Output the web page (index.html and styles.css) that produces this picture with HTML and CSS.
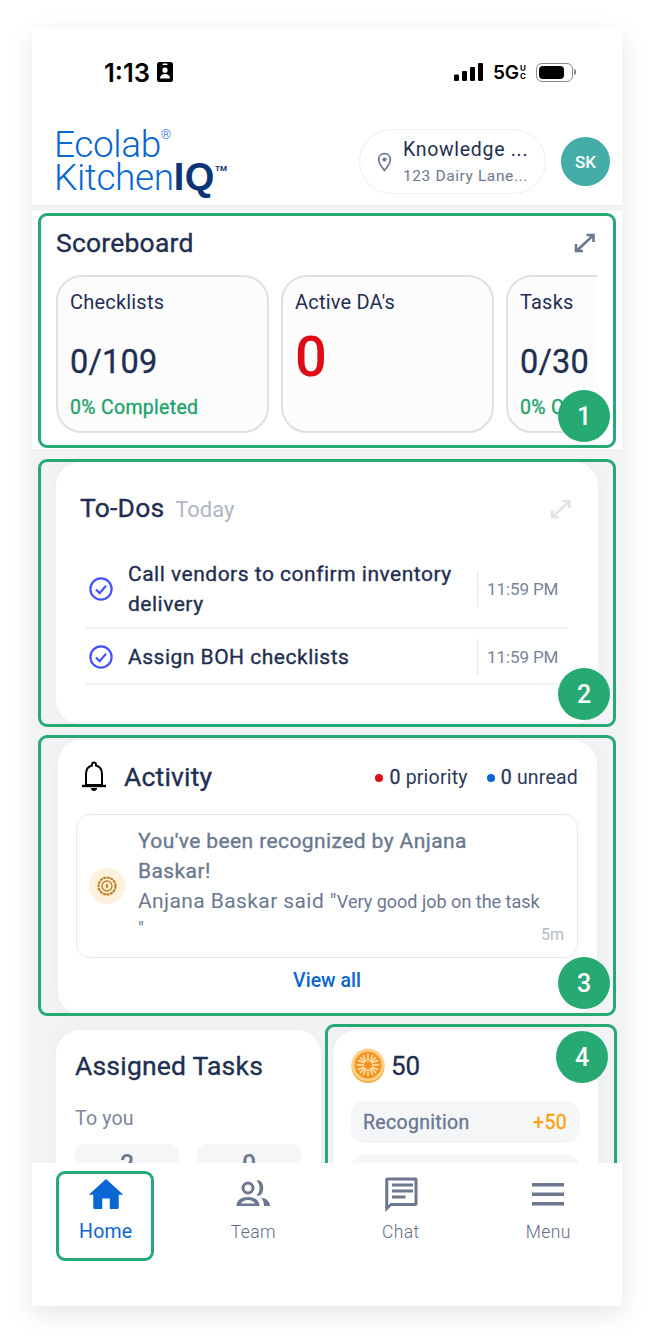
FILE: index.html
```html
<!DOCTYPE html>
<html lang="en">
<head>
    <meta charset="UTF-8">
    <meta name="viewport" content="width=device-width, initial-scale=1.0">
    <title>Ecolab KitchenIQ Home</title>
    <link rel="stylesheet" href="styles.css">
</head>
<body>
    <div class="phone">
        <div class="status-bar">
            <div class="status-left">
                <span class="clock">1:13</span>
                <svg class="id-icon" viewBox="0 0 16 20">
                    <rect width="16" height="20" rx="2.5" fill="#000"/>
                    <rect x="5.5" y="1.6" width="5" height="1.5" rx=".7" fill="#fff"/>
                    <circle cx="8" cy="8.2" r="2.6" fill="#fff"/>
                    <path d="M3 16.500c0-3 2-4.500 5-4.500s5 1.500 5 4.500z" fill="#fff"/>
                </svg>
            </div>
            <div class="status-right">
                <svg class="signal" viewBox="0 0 30 18">
                    <rect x="0" y="11.500" width="5" height="6.500" rx="1.200"/>
                    <rect x="8" y="8" width="5" height="10" rx="1.200"/>
                    <rect x="16" y="4" width="5" height="14" rx="1.200"/>
                    <rect x="24" y="0" width="5" height="18" rx="1.200"/>
                </svg>
                <span class="network">5G<span class="network-uc">U<br>C</span></span>
                <span class="battery"><span class="battery-fill"></span></span>
            </div>
        </div>

        <header class="app-header">
            <div class="logo">
                <div class="logo-line">Ecolab<sup class="logo-reg">®</sup></div>
                <div class="logo-line">Kitchen<b class="logo-iq">IQ</b><sup class="logo-tm">TM</sup></div>
            </div>
            <div class="location">
                <svg class="pin" viewBox="0 0 18 24">
                    <path d="M9 2C5 2 2 5 2 9c0 4.500 4 9.500 7 13 3-3.500 7-8.500 7-13 0-4-3-7-7-7z" fill="none" stroke="#6b7890" stroke-width="2"/>
                    <circle cx="9" cy="9" r="2.500" fill="#6b7890"/>
                </svg>
                <div class="location-text">
                    <div class="location-name">Knowledge ...</div>
                    <div class="location-addr">123 Dairy Lane...</div>
                </div>
            </div>
            <div class="avatar">SK</div>
        </header>

        <main class="content">
            <section class="scoreboard">
                <div class="card-head">
                    <h2 class="title">Scoreboard</h2>
                    <svg class="expand" viewBox="0 0 22 20">
                        <path d="M3 17.500 19 2.500M12.500 2h7v7M2 11v7h7" fill="none" stroke="#6b7890" stroke-width="2.600"/>
                    </svg>
                </div>
                <div class="score-row">
                    <div class="score-card">
                        <div class="score-label">Checklists</div>
                        <div class="score-value">0/109</div>
                        <div class="score-note">0% Completed</div>
                    </div>
                    <div class="score-card">
                        <div class="score-label">Active DA's</div>
                        <div class="score-alert">0</div>
                    </div>
                    <div class="score-card">
                        <div class="score-label">Tasks</div>
                        <div class="score-value">0/30</div>
                        <div class="score-note">0% Completed</div>
                    </div>
                </div>
            </section>

            <section class="card todos">
                <div class="card-head">
                    <h2 class="title">To-Dos <span class="title-sub">Today</span></h2>
                    <svg class="expand" viewBox="0 0 22 20">
                        <path d="M3 17.500 19 2.500M12.500 2h7v7M2 11v7h7" fill="none" stroke="#e1e4e9" stroke-width="2.600"/>
                    </svg>
                </div>
                <div class="todo-row">
                    <svg class="check" viewBox="0 0 26 26">
                        <circle cx="13" cy="13" r="11.500" fill="none" stroke="#4353ff" stroke-width="2.400"/>
                        <path d="M7.500 13.500l4 4 7-8" fill="none" stroke="#4353ff" stroke-width="2.400"/>
                    </svg>
                    <div class="todo-text">Call vendors to confirm inventory delivery</div>
                    <div class="todo-time">11:59 PM</div>
                </div>
                <div class="todo-row">
                    <svg class="check" viewBox="0 0 26 26">
                        <circle cx="13" cy="13" r="11.500" fill="none" stroke="#4353ff" stroke-width="2.400"/>
                        <path d="M7.500 13.500l4 4 7-8" fill="none" stroke="#4353ff" stroke-width="2.400"/>
                    </svg>
                    <div class="todo-text">Assign BOH checklists</div>
                    <div class="todo-time">11:59 PM</div>
                </div>
            </section>

            <section class="card activity">
                <div class="activity-head">
                    <svg class="bell" viewBox="0 0 26 32">
                        <path d="M13 1.500a2 2 0 0 1 2 2v1c4 1 6 4.500 6 8.500v11H5V13c0-4 2-7.500 6-8.500v-1a2 2 0 0 1 2-2z" fill="none" stroke="#000" stroke-width="2"/>
                        <path d="M1 25h24" stroke="#000" stroke-width="2.400"/>
                        <path d="M10 27h6a3 3 0 0 1-6 0z" fill="#000"/>
                    </svg>
                    <h2 class="title">Activity</h2>
                    <div class="counts">
                        <span class="dot dot-red"></span><span class="count-num">0</span> priority
                        <span class="dot dot-blue"></span><span class="count-num">0</span> unread
                    </div>
                </div>
                <div class="notice">
                    <div class="notice-icon">
                        <svg viewBox="0 0 20 20" width="20" height="20">
                            <circle cx="10" cy="10" r="8.500" fill="none" stroke="#c08122" stroke-width="2.200" stroke-dasharray="3 .6"/>
                            <circle cx="10" cy="10" r="5" fill="none" stroke="#c08122" stroke-width="1.400"/>
                            <path d="M10 7l1.500 3L10 13l-1.500-3z" fill="#c08122"/>
                        </svg>
                    </div>
                    <div class="notice-body">
                        <div class="notice-title">You've been recognized by Anjana Baskar!</div>
                        <div class="notice-said">Anjana Baskar said "<span class="notice-quote">Very good job on the task<br>"</span></div>
                        <div class="notice-age">5m</div>
                    </div>
                </div>
                <div class="view-all">View all</div>
            </section>

            <div class="bottom-cards">
                <section class="card assigned">
                    <h2 class="title">Assigned Tasks</h2>
                    <div class="assigned-sub">To you</div>
                    <div class="assigned-tiles">
                        <div class="assigned-tile">2</div>
                        <div class="assigned-tile">0</div>
                    </div>
                </section>
                <section class="card points">
                    <div class="points-head">
                        <svg class="coin" viewBox="0 0 34 36">
                            <circle cx="17" cy="18.500" r="16.500" fill="#f8a827"/>
                            <circle cx="17" cy="17" r="16.500" fill="#fbd28c"/>
                            <circle cx="17" cy="17" r="13.500" fill="#f5951f"/>
                            <g stroke="#fde3b8" stroke-width="1.500" stroke-linecap="round">
                                <path d="M17 6.500v6M17 21.500v6M6.500 17h6M21.500 17h6M9.600 9.600l4.200 4.200M20.200 20.200l4.200 4.200M24.400 9.600l-4.200 4.200M13.800 20.200l-4.200 4.200M12.500 7.500l2.300 5.200M19.200 21.300l2.300 5.200M21.500 7.500l-2.300 5.200M14.800 21.300l-2.300 5.200M7.500 12.500l5.200 2.300M21.300 19.200l5.200 2.300M26.500 12.500l-5.200 2.300M12.700 19.200l-5.200 2.300"/>
                            </g>
                        </svg>
                        <span class="points-total">50</span>
                    </div>
                    <div class="points-row">
                        <span>Recognition</span>
                        <span class="points-plus">+50</span>
                    </div>
                    <div class="points-row"></div>
                </section>
            </div>

            <div class="mark mark-score"><span class="mark-num">1</span></div>
            <div class="mark mark-todos"><span class="mark-num">2</span></div>
            <div class="mark mark-activity"><span class="mark-num">3</span></div>
            <div class="mark mark-points"><span class="mark-num">4</span></div>
        </main>

        <nav class="tabs">
            <div class="tab tab-active">
                <svg class="tab-icon" viewBox="0 0 24 24">
                    <path d="M12 2 0.500 12.500H3.500V21a1 1 0 0 0 1 1H9.500v-7h5v7h5a1 1 0 0 0 1-1v-8.500h3z" fill="#0a66d2"/>
                </svg>
                <span>Home</span>
            </div>
            <div class="tab">
                <svg class="tab-icon" viewBox="0 0 36 36">
                    <circle cx="13" cy="12" r="5" fill="none" stroke="#6b7890" stroke-width="3"/>
                    <path d="M23 5c6 0 6 14 0 14 3-4 3-10 0-14z" fill="#6b7890" stroke="#6b7890" stroke-width="1.500"/>
                    <path d="M1.500 30c0-6 5-9 11.500-9s11.500 3 11.500 9zM6 27.500h14c-1-2-4-3.500-7-3.500s-6 1.500-7 3.500z" fill="#6b7890" fill-rule="evenodd"/>
                    <path d="M26 21.500c5 1 9 3.500 9 8.500h-6c0-3.500-1-6-3-8.500z" fill="#6b7890"/>
                </svg>
                <span>Team</span>
            </div>
            <div class="tab">
                <svg class="tab-icon tab-icon-chat" viewBox="0 0 24 24">
                    <path d="M21.500 1H3C1.900 1 1.500 1.500 1.500 2.500V24l4-4h16c1 0 1.500-.5 1.500-1.500v-16C23 1.500 22.500 1 21.500 1zm-.5 17H5L3.500 19.500V3H21zM6 5h14v2H6zM6 9h14v2H6zM6 13h9v2H6z" fill="#6b7890"/>
                </svg>
                <span>Chat</span>
            </div>
            <div class="tab">
                <svg class="tab-icon" viewBox="0 0 36 36">
                    <path d="M2 7h32v3.500H2zM2 16.500h32V20H2zM2 26h32v3.500H2z" fill="#6b7890"/>
                </svg>
                <span>Menu</span>
            </div>
            <div class="mark mark-home"></div>
        </nav>
    </div>
</body>
</html>
```

FILE: styles.css
```css
* {
    box-sizing: border-box;
}
body {
    margin: 0;
    padding: 28px 32px 0;
    height: 1342px;
    overflow: hidden;
    background: #fff;
    font-family: Roboto, "Liberation Sans", sans-serif;
    color: #1f2f52;
}
.phone {
    width: 590px;
    height: 1278px;
    display: flex;
    flex-direction: column;
    background: #fff;
    box-shadow: 0 8px 24px rgba(0, 0, 0, 0.1);
}

/* status bar */
.status-bar {
    height: 88px;
    flex: none;
    display: flex;
    justify-content: space-between;
    align-items: center;
    padding: 0 49px 0 72px;
}
.status-left, .status-right {
    display: flex;
    align-items: center;
}
.clock {
    font-family: Inter, sans-serif;
    font-size: 25.500px;
    font-weight: 600;
    color: #000;
}
.id-icon {
    width: 16px;
    height: 20px;
    margin-left: 7px;
}
.signal {
    width: 30px;
    height: 18px;
}
.network {
    display: flex;
    align-items: center;
    margin-left: 9px;
    font-family: Inter, sans-serif;
    font-size: 19px;
    font-weight: 600;
    color: #000;
}
.network-uc {
    font-size: 8px;
    line-height: 8px;
    font-weight: 700;
    margin-left: 1px;
}
.battery {
    position: relative;
    width: 37px;
    height: 19px;
    margin-left: 10px;
    padding: 2px;
    border: 1.500px solid #8a8a8a;
    border-radius: 6px;
}
.battery:after {
    content: "";
    position: absolute;
    right: -4px;
    top: 5px;
    width: 2px;
    height: 6px;
    border-radius: 0 2px 2px 0;
    background: #8a8a8a;
}
.battery-fill {
    display: block;
    width: 25px;
    height: 100%;
    border-radius: 4px;
    background: #000;
}

/* app header */
.app-header {
    height: 90px;
    flex: none;
    display: flex;
    align-items: flex-start;
    padding: 13px 12px 0 22px;
    border-bottom: 1px solid #eceef1;
}
.logo {
    flex: 1;
    margin-top: -1px;
    color: #0a66d2;
    font-size: 37px;
    font-weight: 300;
    line-height: 33px;
    letter-spacing: -0.4px;
}
.logo-line {
    white-space: nowrap;
}
.logo-iq {
    font-family: "Liberation Sans", sans-serif;
    font-size: 38px;
    font-weight: 700;
    color: #0b3576;
    letter-spacing: 0.6px;
}
.logo-reg {
    font-size: 13px;
    line-height: 0;
    vertical-align: 18px;
    letter-spacing: 0;
}
.logo-tm {
    font-size: 8px;
    font-weight: 700;
    line-height: 0;
    vertical-align: 19px;
    letter-spacing: 0;
    color: #0b3576;
}
.location {
    width: 187px;
    height: 65px;
    display: flex;
    align-items: center;
    gap: 11px;
    padding-left: 17px;
    border: 1.500px solid #eceef1;
    border-radius: 33px;
}
.pin {
    width: 15px;
    height: 20px;
    flex: none;
}
.location-text {
    margin-top: 3px;
}
.location-name {
    font-size: 19.500px;
    letter-spacing: 0.7px;
    line-height: 26px;
    white-space: nowrap;
}
.location-addr {
    font-size: 15.500px;
    letter-spacing: 0.6px;
    line-height: 26px;
    color: #6b7890;
    white-space: nowrap;
}
.avatar {
    width: 49px;
    height: 49px;
    margin: 8px 0 0 15px;
    display: flex;
    align-items: center;
    justify-content: center;
    border-radius: 50%;
    background: #45ada8;
    color: #fff;
    font-size: 17px;
    font-weight: 500;
}

.content {
    position: relative;
    flex: 1;
    min-height: 0;
    overflow: hidden;
    background: #f2f3f5;
    padding-top: 5px;
}
.card {
    background: #fff;
    border-radius: 24px;
    box-shadow: 0 0 14px rgba(0, 0, 0, 0.03);
}
.card-head {
    display: flex;
    justify-content: space-between;
    align-items: center;
}
/* the installed Roboto has no weight between 400 and 500 */
.title, .score-value, .score-note, .todo-text, .notice-title, .count-num, .points-total, .points-row {
    -webkit-text-stroke: 0.35px;
}
.title {
    margin: 0;
    font-size: 26.500px;
    font-weight: 400;
    line-height: 32px;
    letter-spacing: 0.2px;
}
.title-sub {
    margin-left: 4px;
    font-size: 22px;
    font-weight: 400;
    letter-spacing: 0;
    color: #b0b6c3;
    -webkit-text-stroke: 0;
}
.expand {
    width: 22px;
    height: 20px;
}

/* scoreboard */
.scoreboard {
    height: 238px;
    padding: 16px 24px 0;
    background: #fff;
}
.scoreboard .card-head {
    padding-right: 2px;
}
.score-row {
    display: flex;
    gap: 12px;
    margin-top: 16px;
    overflow: hidden;
}
.score-card {
    flex: 0 0 213px;
    height: 158px;
    padding: 13px 12px;
    border: 2px solid #dfe0e6;
    border-radius: 26px;
    background: #fcfcfd;
}
.score-label {
    font-size: 20px;
    line-height: 24px;
    letter-spacing: 0.2px;
}
.score-value {
    margin-top: 28px;
    font-size: 32.500px;
    line-height: 40px;
    letter-spacing: 0.2px;
}
.score-note {
    margin-top: 14px;
    font-size: 19.500px;
    line-height: 24px;
    letter-spacing: 0.3px;
    color: #1fa36c;
    white-space: nowrap;
}
.score-alert {
    margin-top: 11px;
    font-size: 56px;
    font-weight: 500;
    line-height: 64px;
    color: #e10b17;
}

/* to-dos */
.todos {
    margin: 13px 24px 0;
    height: 262px;
    padding: 30px 26px 0 24px;
}
.todos .card-head {
    margin-bottom: 27px;
}
.todo-row {
    display: flex;
    align-items: center;
    margin-left: 6px;
    margin-right: 4px;
    padding: 6px 0 8px 3px;
    border-bottom: 2px solid #eff0f2;
}
.todo-row + .todo-row {
    padding-top: 10px;
}
.check {
    width: 24px;
    height: 24px;
    flex: none;
}
.todo-text {
    flex: 1;
    padding-left: 15px;
    padding-right: 14px;
    font-size: 21px;
    line-height: 30px;
    letter-spacing: 0.5px;
}
.todo-time {
    flex: none;
    width: 91px;
    padding: 8px 0 8px 9px;
    border-left: 1px solid #e6e8ec;
    font-size: 17px;
    line-height: 20px;
    letter-spacing: -0.1px;
    color: #7a8499;
    white-space: nowrap;
}

/* activity */
.activity {
    margin: 16px 25px 0 26px;
    height: 275px;
    padding: 21px 19px 0 18px;
}
.activity-head {
    display: flex;
    align-items: center;
}
.bell {
    width: 26px;
    height: 32px;
    margin: 0 17px 0 5px;
}
.counts {
    margin-left: auto;
    font-size: 19.500px;
    letter-spacing: 0.2px;
    color: #2b3a5c;
    white-space: nowrap;
}
.dot {
    display: inline-block;
    width: 8px;
    height: 8px;
    margin-right: 6px;
    border-radius: 50%;
    vertical-align: 2px;
}
.dot-red {
    background: #e10b17;
}
.dot-blue {
    margin-left: 14px;
    background: #0a66d2;
}
.notice {
    position: relative;
    height: 144px;
    margin-top: 21px;
    display: flex;
    align-items: center;
    padding: 0 12px;
    border: 1.500px solid #e8eaee;
    border-radius: 14px;
}
.notice-icon {
    width: 36px;
    height: 36px;
    flex: none;
    display: flex;
    align-items: center;
    justify-content: center;
    border-radius: 50%;
    background: #fdf0dd;
}
.notice-body {
    padding-left: 13px;
    padding-bottom: 4px;
    font-size: 21px;
    line-height: 30px;
    letter-spacing: 0.4px;
    color: #6b7890;
}
.notice-title {
    max-width: 380px;
}
.notice-said {
    margin-top: 2px;
    line-height: 26px;
    white-space: nowrap;
}
.notice-quote {
    font-size: 18px;
    letter-spacing: 0;
}
.notice-age {
    position: absolute;
    right: 13px;
    bottom: 12px;
    font-size: 16px;
    line-height: 20px;
    letter-spacing: 0;
    color: #b5bac4;
}
.view-all {
    margin-top: 11px;
    text-align: center;
    font-size: 19.500px;
    font-weight: 500;
    line-height: 24px;
    color: #0a66d2;
}

/* bottom two cards */
.bottom-cards {
    display: flex;
    gap: 12px;
    margin: 15px 24px 0;
}
.assigned {
    width: 265px;
    height: 200px;
    padding: 20px 19px;
}
.assigned-sub {
    margin-top: 25px;
    font-size: 19.500px;
    line-height: 24px;
    letter-spacing: 0.2px;
    color: #7a879c;
}
.assigned-tiles {
    display: flex;
    gap: 18px;
    margin-top: 13px;
}
.assigned-tile {
    width: 104px;
    height: 60px;
    padding-top: 6px;
    border-radius: 10px;
    background: #f5f6f8;
    text-align: center;
    font-size: 25px;
    font-weight: 500;
    color: #6b7890;
}
.points {
    width: 265px;
    height: 200px;
    padding: 18px 18px;
}
.points-head {
    display: flex;
    align-items: center;
    gap: 6px;
}
.coin {
    width: 34px;
    height: 36px;
}
.points-total {
    font-size: 26px;
}
.points-row {
    display: flex;
    justify-content: space-between;
    align-items: center;
    height: 42px;
    margin-top: 17px;
    padding: 0 13px 0 12px;
    border-radius: 14px;
    background: #f5f6f8;
    font-size: 19.500px;
    letter-spacing: 0.3px;
    color: #6b7890;
}
.points-row + .points-row {
    margin-top: 12px;
}
.points-plus {
    color: #ff9f0a;
}

/* tutorial marks over the page */
.mark {
    position: absolute;
    border: 3px solid #27a974;
    border-radius: 9px;
}
.mark-num {
    position: absolute;
    width: 52px;
    height: 52px;
    display: flex;
    align-items: center;
    justify-content: center;
    border-radius: 50%;
    background: #27a974;
    color: #fff;
    font-size: 25px;
    font-weight: 500;
}
.mark-score {
    left: 6px;
    top: 7px;
    width: 578px;
    height: 235px;
}
.mark-todos {
    left: 6px;
    top: 253px;
    width: 578px;
    height: 268px;
}
.mark-activity {
    left: 6px;
    top: 529px;
    width: 578px;
    height: 281px;
}
.mark-points {
    left: 293px;
    top: 818px;
    width: 292px;
    height: 200px;
}
.mark-score .mark-num {
    right: 3px;
    bottom: 3px;
}
.mark-todos .mark-num, .mark-activity .mark-num {
    right: 3px;
    bottom: 4px;
}
.mark-points .mark-num {
    right: 6px;
    top: 4px;
}

/* bottom tabs */
.tabs {
    position: relative;
    height: 143px;
    flex: none;
    display: flex;
    background: #fff;
}
.tab {
    flex: 1;
    height: 90px;
    margin-top: 10px;
    display: flex;
    flex-direction: column;
    align-items: center;
    font-size: 17.500px;
    font-weight: 300;
    letter-spacing: 0.4px;
    color: #5f6c85;
}
.tab-active {
    color: #0a66d2;
    font-size: 19.500px;
    font-weight: 400;
    letter-spacing: 0.2px;
}
.tab-icon {
    width: 36px;
    height: 36px;
    margin-top: 3px;
    margin-bottom: 10px;
}
.tab-active .tab-icon {
    margin-bottom: 8px;
}
.mark-home {
    left: 24px;
    top: 8px;
    width: 98px;
    height: 90px;
}
```
